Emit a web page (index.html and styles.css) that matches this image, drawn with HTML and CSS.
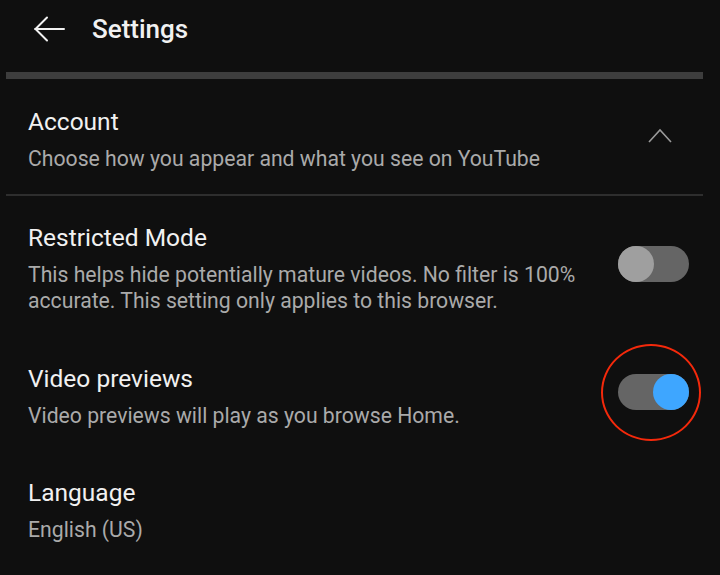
FILE: index.html
```html
<!DOCTYPE html>
<html lang="en">
<head>
<meta charset="utf-8">
<title>Settings</title>
<link rel="stylesheet" href="styles.css">
</head>
<body>
<div class="page">
  <header class="header">
    <svg class="back" width="32" height="26" viewBox="0 0 32 26" aria-hidden="true">
      <path d="M31 13H2M14 1.5L2.5 13L14 24.5" fill="none" stroke="#f1f1f1" stroke-width="2" stroke-linecap="round" stroke-linejoin="round"/>
    </svg>
    <h1 class="title">Settings</h1>
  </header>
  <div class="bar"></div>
  <section class="row row-account">
    <div class="text">
      <div class="row-title">Account</div>
      <div class="row-sub">Choose how you appear and what you see on YouTube</div>
    </div>
    <svg class="chev" width="24" height="15" viewBox="0 0 24 15" aria-hidden="true">
      <path d="M1 14L12 2L23 14" fill="none" stroke="#9a9a9a" stroke-width="1.6"/>
    </svg>
  </section>
  <div class="divider"></div>
  <section class="row row-restricted">
    <div class="text">
      <div class="row-title">Restricted Mode</div>
      <div class="row-sub">This helps hide potentially mature videos. No filter is 100% accurate. This setting only applies to this browser.</div>
    </div>
    <div class="toggle"><span class="knob"></span></div>
  </section>
  <section class="row row-previews">
    <div class="text">
      <div class="row-title">Video previews</div>
      <div class="row-sub">Video previews will play as you browse Home.</div>
    </div>
    <div class="toggle toggle-on"><span class="knob"></span><span class="ring"></span></div>
  </section>
  <section class="row row-language">
    <div class="text">
      <div class="row-title">Language</div>
      <div class="row-sub">English (US)</div>
    </div>
  </section>
</div>
</body>
</html>
```
FILE: styles.css
```css
html, body {
  margin: 0;
  padding: 0;
  background: #0f0f0f;
}
body {
  font-family: Roboto, "Noto Sans", "Liberation Sans", sans-serif;
  color: #f1f1f1;
  width: 720px;
  height: 575px;
  overflow: hidden;
}
.page {
  margin: 0 17px 0 6px;
}
.header {
  display: flex;
  align-items: center;
  height: 57px;
  padding-left: 27px;
  margin-bottom: 15px;
}
.back {
  display: block;
  flex: none;
}
.title {
  margin: 0 0 0 27px;
  font-size: 26px;
  font-weight: 500;
  line-height: 30px;
  color: #f1f1f1;
}
.bar {
  height: 7px;
  background: #3d3d3d;
}
.divider {
  height: 2px;
  background: #2e2e2e;
}
.row {
  display: flex;
  align-items: center;
  padding: 0 14px 0 22px;
}
.text {
  flex: 1;
  min-width: 0;
}
.row-title {
  font-size: 24.5px;
  line-height: 30px;
  color: #f1f1f1;
}
.row-sub {
  margin-top: 9px;
  font-size: 21.2px;
  line-height: 26.6px;
  color: #aaaaaa;
}
.row-account {
  padding-top: 28px;
  padding-bottom: 21px;
  padding-right: 31px;
}
.chev {
  display: block;
  flex: none;
  margin-bottom: 8px;
}
.row-restricted {
  padding-top: 27px;
  padding-bottom: 25px;
}
.row-restricted .text {
  padding-right: 30px;
}
.row-previews {
  padding-top: 24px;
  padding-bottom: 24px;
}
.row-language {
  padding-top: 25px;
}
.toggle {
  position: relative;
  flex: none;
  width: 71px;
  height: 36px;
  border-radius: 18px;
  background: #656565;
  margin-bottom: 10px;
}
.knob {
  position: absolute;
  top: 0;
  left: 0;
  width: 36px;
  height: 36px;
  border-radius: 50%;
  background: #9f9f9f;
}
.toggle-on .knob {
  left: auto;
  right: 0;
  background: #3ea6ff;
}
.ring {
  position: absolute;
  left: -17px;
  top: -30px;
  width: 96px;
  height: 93px;
  border: 2.5px solid #f4290b;
  border-radius: 50%;
}
```
